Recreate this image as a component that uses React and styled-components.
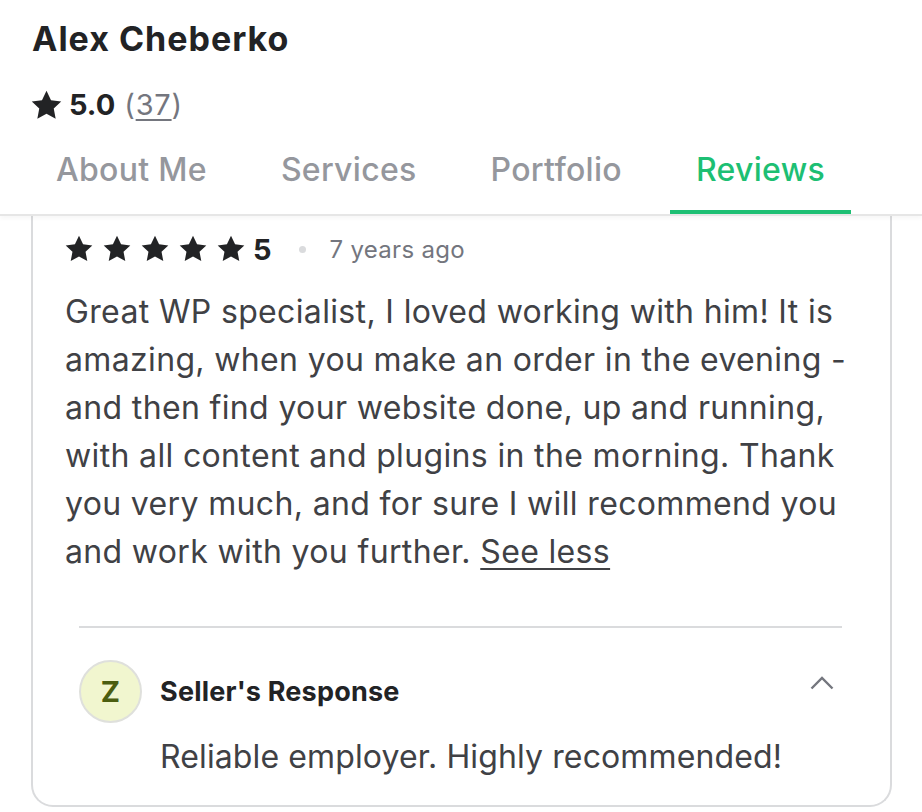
import React from "react";
import styled, { createGlobalStyle } from "styled-components";

const Global = createGlobalStyle`
  html, body { margin: 0; padding: 0; background: #fff; }
  body { font-family: Inter, "Noto Sans", sans-serif; color: #222325; }
  * { box-sizing: border-box; }
`;

const Page = styled.div`
  width: 922px;
  height: 812px;
  overflow: hidden;
  display: flex;
  flex-direction: column;
`;

const Header = styled.header`
  position: relative;
  z-index: 2;
  background: #fff;
  border-bottom: 2px solid #e6e6e6;
  box-shadow: 0 3px 4px rgba(0, 0, 0, 0.03);
`;

const Name = styled.h1`
  margin: 0;
  padding: 18px 0 0 32px;
  font-size: 34px;
  line-height: 42px;
  font-weight: 700;
  letter-spacing: 1px;
  color: #222325;
`;

const RatingRow = styled.div`
  display: flex;
  align-items: center;
  gap: 7px;
  padding: 27px 0 0 31px;
  font-size: 29px;
  line-height: 36px;
`;

const Score = styled.span`
  font-weight: 700;
  color: #222325;
`;

const Count = styled.span`
  margin-left: 2px;
  color: #74767e;
  letter-spacing: 0.8px;
  & u { text-underline-offset: 4px; text-decoration-thickness: 2px; }
`;

const Tabs = styled.nav`
  display: flex;
  gap: 22px;
  padding: 17px 0 0 30px;
`;

const Tab = styled.div`
  padding: 10px 26px 20px;
  font-size: 32px;
  line-height: 40px;
  font-weight: 500;
  letter-spacing: 0.3px;
  color: ${(p) => (p.$active ? "#1dbf73" : "#95979d")};
  border-bottom: 4px solid ${(p) => (p.$active ? "#1dbf73" : "transparent")};
`;

const Card = styled.article`
  margin: 0 30px 0 31px;
  border: 2px solid #dadbdd;
  border-top: 0;
  border-radius: 0 0 22px 22px;
  padding: 15px 34px 0 32px;
`;

const StarsRow = styled.div`
  display: flex;
  align-items: center;
  height: 36px;
  color: #222325;
`;

const Stars = styled.div`
  display: flex;
  gap: 10px;
`;

const Grade = styled.span`
  margin-left: 8px;
  font-size: 29px;
  font-weight: 700;
`;

const Dot = styled.span`
  width: 7px;
  height: 7px;
  border-radius: 50%;
  background: #dadbdd;
  margin: 0 24px 0 27px;
`;

const Ago = styled.span`
  font-size: 24px;
  letter-spacing: 0.3px;
  color: #74767e;
`;

const Body = styled.p`
  margin: 21px 0 0;
  font-size: 32px;
  line-height: 48px;
  letter-spacing: 0.35px;
  color: #404145;
  & a { color: #404145; text-underline-offset: 5px; text-decoration-thickness: 2px; }
`;

const Response = styled.section`
  margin: 50px 14px 0 14px;
  border-top: 2px solid #dadbdd;
  padding: 32px 0 28px;
`;

const RespHead = styled.div`
  display: flex;
  align-items: center;
  gap: 18px;
`;

const Avatar = styled.div`
  width: 63px;
  height: 63px;
  border-radius: 50%;
  background: #f1f6cf;
  border: 2px solid #dfe0dc;
  display: grid;
  place-items: center;
  font-size: 29px;
  font-weight: 700;
  color: #4b5e10;
`;

const RespTitle = styled.span`
  flex: 1;
  font-size: 27px;
  font-weight: 700;
  letter-spacing: 0.2px;
  color: #222325;
`;

const Chevron = styled.svg`
  width: 24px;
  height: 14px;
  margin-right: 8px;
  margin-bottom: 18px;
`;

const RespText = styled.p`
  margin: 14px 0 0 81px;
  font-size: 32px;
  line-height: 40px;
  letter-spacing: 0.12px;
  color: #404145;
`;

const Star = ({ size = 30 }) => (
  <svg width={size} height={size} viewBox="0 0 24 24" fill="currentColor">
    <path d="M12 0.6l3.5 7.3 7.9 1-5.8 5.5 1.5 7.9L12 18.4l-7.1 3.9 1.5-7.9L.6 8.9l7.9-1z" />
  </svg>
);

export default function App() {
  return (
    <>
      <Global />
      <Page>
        <Header>
          <Name>Alex Cheberko</Name>
          <RatingRow>
            <Star size={31} />
            <Score>5.0</Score>
            <Count>
              (<u>37</u>)
            </Count>
          </RatingRow>
          <Tabs>
            <Tab>About Me</Tab>
            <Tab>Services</Tab>
            <Tab>Portfolio</Tab>
            <Tab $active>Reviews</Tab>
          </Tabs>
        </Header>
        <Card>
          <StarsRow>
            <Stars>
              {[0, 1, 2, 3, 4].map((i) => (
                <Star key={i} size={28} />
              ))}
            </Stars>
            <Grade>5</Grade>
            <Dot />
            <Ago>7 years ago</Ago>
          </StarsRow>
          <Body>
            Great WP specialist, I loved working with him! It is amazing, when
            you make an order in the evening - and then find your website done,
            up and running, with all content and plugins in the morning. Thank
            you very much, and for sure I will recommend you and work with you
            further. <a href="#">See less</a>
          </Body>
          <Response>
            <RespHead>
              <Avatar>Z</Avatar>
              <RespTitle>Seller's Response</RespTitle>
              <Chevron viewBox="0 0 24 14" fill="none" stroke="#74767e" strokeWidth="2.4">
                <path d="M1.5 12.5L12 2l10.5 10.5" />
              </Chevron>
            </RespHead>
            <RespText>Reliable employer. Highly recommended!</RespText>
          </Response>
        </Card>
      </Page>
    </>
  );
}
